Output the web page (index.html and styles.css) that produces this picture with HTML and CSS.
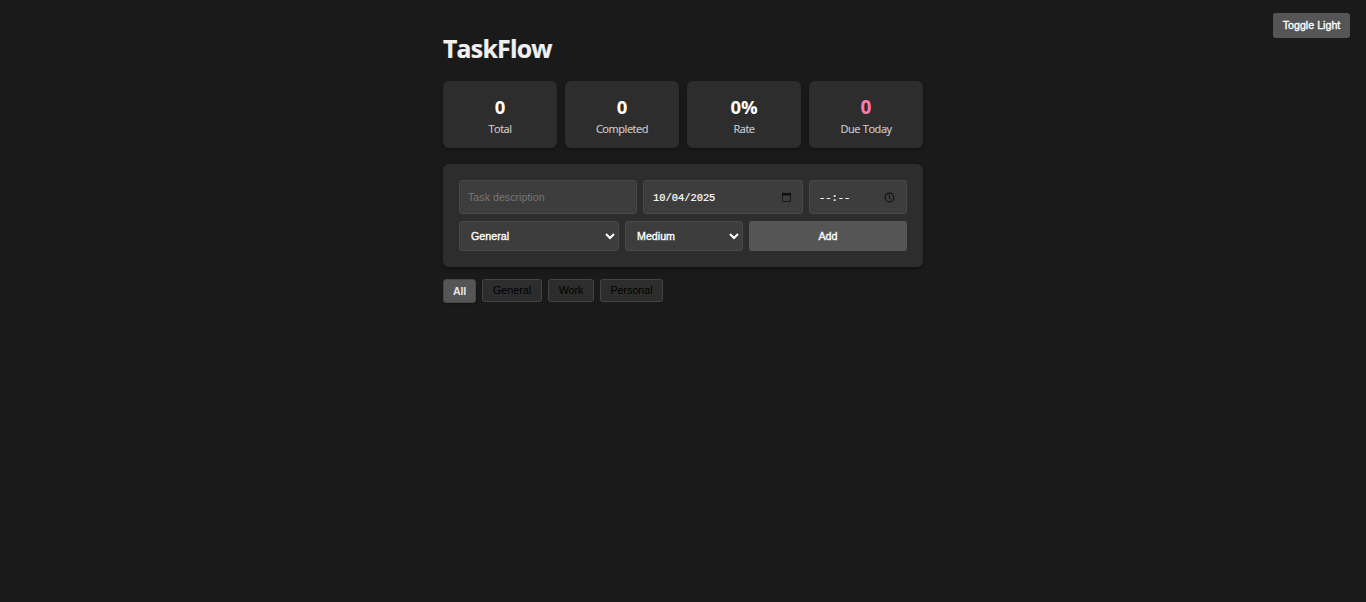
FILE: index.html
```html
<!DOCTYPE html>
<html lang="en">
<head>
<meta charset="utf-8">
<title>TaskFlow</title>
<link rel="stylesheet" href="styles.css">
</head>
<body>
<button class="theme-toggle">Toggle Light</button>
<main class="container">
  <h1 class="title"><span>TaskFlow</span></h1>
  <section class="stats">
    <div class="stat"><div class="value">0</div><div class="label">Total</div></div>
    <div class="stat"><div class="value">0</div><div class="label">Completed</div></div>
    <div class="stat"><div class="value">0%</div><div class="label">Rate</div></div>
    <div class="stat"><div class="value due">0</div><div class="label">Due Today</div></div>
  </section>
  <section class="form">
    <div class="row row-top">
      <div class="field placeholder">Task description</div>
      <div class="field mono date"><span>10/04/2025</span>
        <svg class="icon" viewBox="0 0 11 11"><path d="M1.5 1.5h8v8h-8z" fill="none" stroke="#151515"/><path d="M1 1h9v2.4H1zM2 .4h1V1H2zM8 .4h1V1H8z" fill="#101010"/></svg>
      </div>
      <div class="field mono"><span>--:--</span>
        <svg class="icon" viewBox="0 0 11 11"><circle cx="5.5" cy="5.5" r="4.4" fill="none" stroke="#101010" stroke-width="1.1"/><path d="M5.3 2.7v3l2 1.3" fill="none" stroke="#101010"/></svg>
      </div>
    </div>
    <div class="row row-bottom">
      <select class="select"><option>General</option></select>
      <select class="select"><option>Medium</option></select>
      <button class="add">Add</button>
    </div>
  </section>
  <nav class="filters">
    <button class="filter active">All</button>
    <button class="filter general">General</button>
    <button class="filter work">Work</button>
    <button class="filter personal">Personal</button>
  </nav>
</main>
</body>
</html>
```
FILE: styles.css
```css
* { box-sizing: border-box; }
body {
  margin: 0;
  min-height: 602px;
  background: #1a1a1a;
  color: #f0f0f0;
  font-family: "Open Sans", "Noto Sans", sans-serif;
}
button, select, .field {
  font-family: "Liberation Sans", Arial, sans-serif;
  font-size: 10.7px;
}
button { padding: 0; }
.theme-toggle {
  position: absolute;
  top: 13px;
  right: 16px;
  width: 77px;
  height: 25px;
  padding-bottom: 2px;
  border: 0;
  border-radius: 3px;
  background: #555;
  color: #fff;
  -webkit-text-stroke: 0.35px #fff;
}
.container { width: 480px; margin: 0 auto; padding-top: 31px; }
.title {
  margin: 0 0 16px;
  height: 34px;
  font-size: 24.8px;
  line-height: 34px;
  font-weight: 700;
  letter-spacing: -0.75px;
  -webkit-text-stroke: 0.2px #f0f0f0;
}
.stats { display: grid; grid-template-columns: repeat(4, 1fr); gap: 8px; }
.stat {
  height: 67px;
  padding-top: 13px;
  border-radius: 6px;
  background: #2d2d2d;
  box-shadow: 0 2px 4px rgba(0, 0, 0, 0.3);
  text-align: center;
}
.value { height: 26px; font-size: 18.5px; line-height: 25px; font-weight: 700; color: #fff; }
.due { font-size: 19px; line-height: 26px; color: #fa7ab8; }
.label {
  font-size: 11px;
  line-height: 18px;
  color: #ccc;
  letter-spacing: -0.45px;
  word-spacing: 0.5px;
  -webkit-text-stroke: 0.15px #ccc;
}
.form {
  margin-top: 16px;
  height: 103px;
  padding: 16px;
  border-radius: 6px;
  background: #2d2d2d;
  box-shadow: 0 2px 4px rgba(0, 0, 0, 0.3);
}
.row { display: grid; gap: 6px; }
.row-top { grid-template-columns: 178px 160px 98px; height: 34px; }
.row-bottom { grid-template-columns: 160px 118px 158px; height: 30px; margin-top: 7px; }
.field, .select {
  border: 1px solid #484848;
  border-radius: 3px;
  background: #3d3d3d;
  color: #fff;
}
.field { display: flex; align-items: center; justify-content: space-between; padding: 0 11px 0 9px; }
.placeholder { color: #757575; padding-left: 8px; font-size: 10.7px; }
.mono { font-family: "Liberation Mono", monospace; font-size: 10.4px; -webkit-text-stroke: 0.2px #fff; }
.mono span { padding-top: 1px; }
.date { padding-right: 10px; }
.icon { width: 11px; height: 11px; }
.select { padding: 0 0 0 7px; -webkit-text-stroke: 0.35px #fff; }
.add { border: 0; border-radius: 3px; background: #555; color: #fff; -webkit-text-stroke: 0.35px #fff; }
.filters { display: flex; gap: 6px; margin-top: 12px; }
.filter {
  height: 23px;
  padding-bottom: 1px;
  border: 1px solid #444;
  border-radius: 3px;
  background: #2d2d2d;
  color: #000;
}
.active {
  width: 33px;
  height: 24px;
  padding: 0;
  border-color: #484848;
  background: #555;
  color: #e8e8e8;
  font-weight: 700;
  letter-spacing: -0.3px;
  box-shadow: 0 1px 2px rgba(0, 0, 0, 0.3);
}
.general { width: 60px; }
.work { width: 46px; }
.personal { width: 63px; }
```
